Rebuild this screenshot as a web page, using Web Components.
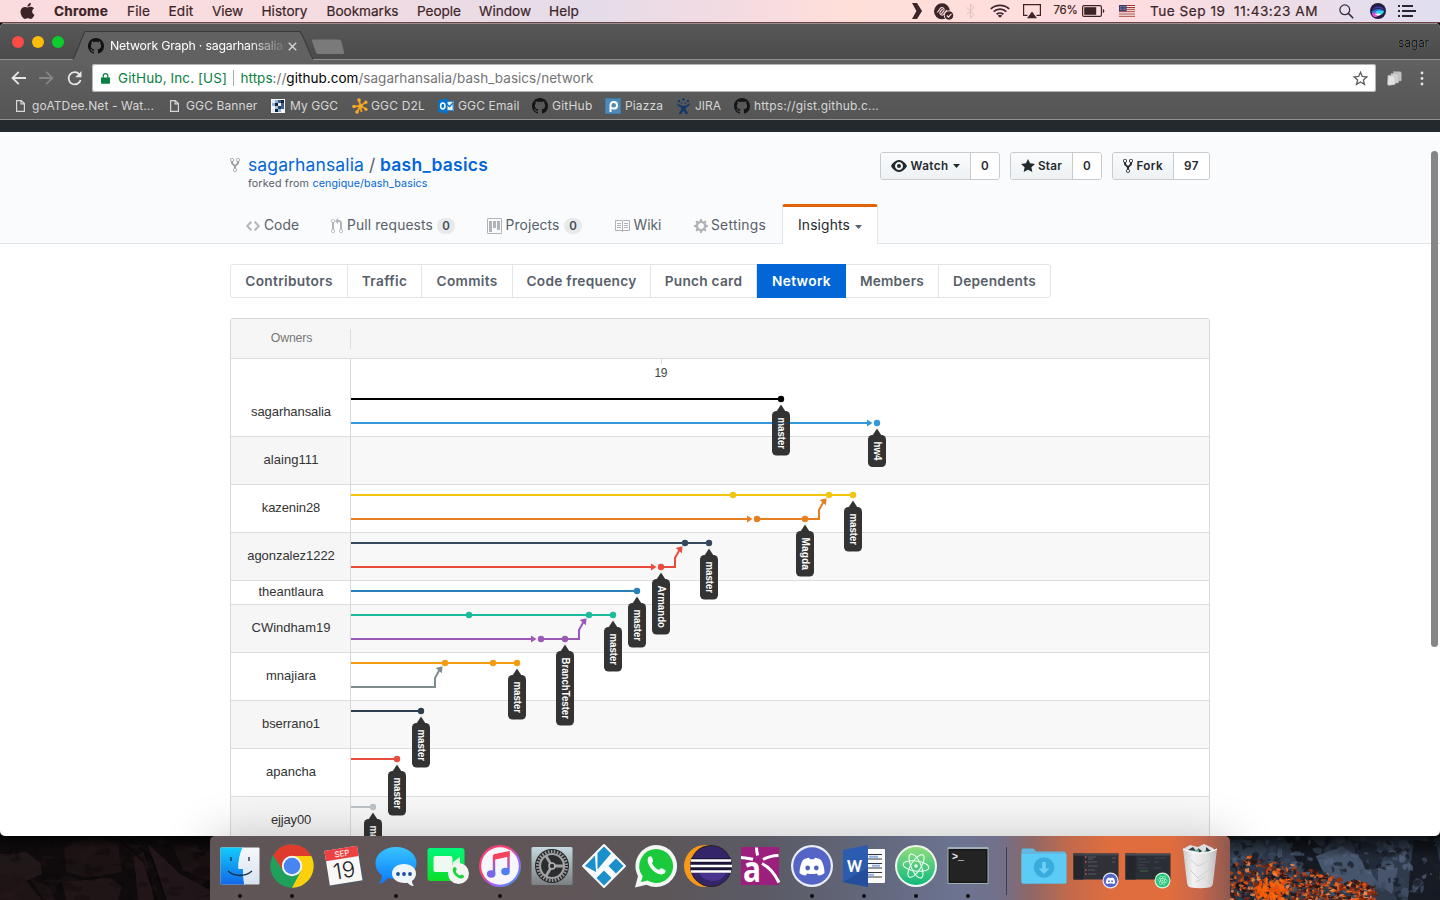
<!DOCTYPE html>
<html lang="en">
<head>
<meta charset="utf-8">
<title>Network Graph · sagarhansalia/bash_basics</title>
<style>
html,body{margin:0;padding:0;width:1440px;height:900px;overflow:hidden;background:#141010;font-family:Inter,"Liberation Sans",sans-serif}
</style>
</head>
<body>
<mac-desktop></mac-desktop>
<script>
const ICONS = {
  apple:[24,24,'<path d="M12.152 6.896c-.948 0-2.415-1.078-3.96-1.04-2.04.027-3.91 1.183-4.961 3.014-2.117 3.675-.546 9.103 1.519 12.09 1.013 1.454 2.208 3.09 3.792 3.039 1.52-.065 2.09-.987 3.935-.987 1.831 0 2.35.987 3.96.948 1.637-.026 2.676-1.48 3.676-2.948 1.156-1.688 1.636-3.325 1.662-3.415-.039-.013-3.182-1.221-3.22-4.857-.026-3.04 2.48-4.494 2.597-4.559-1.429-2.09-3.623-2.324-4.39-2.376-2-.156-3.675 1.09-4.61 1.09zM15.53 3.83c.843-1.012 1.4-2.427 1.245-3.83-1.207.052-2.662.805-3.532 1.818-.78.896-1.454 2.338-1.273 3.714 1.338.104 2.715-.688 3.559-1.701"/>'],
  github:[16,16,'<path d="M8 0C3.58 0 0 3.58 0 8c0 3.54 2.29 6.53 5.47 7.59.4.07.55-.17.55-.38 0-.19-.01-.82-.01-1.49-2.01.37-2.53-.49-2.69-.94-.09-.23-.48-.94-.82-1.13-.28-.15-.68-.52-.01-.53.63-.01 1.08.58 1.23.82.72 1.21 1.87.87 2.33.66.07-.52.28-.87.51-1.07-1.78-.2-3.64-.89-3.64-3.95 0-.87.31-1.59.82-2.15-.08-.2-.36-1.02.08-2.12 0 0 .67-.21 2.2.82.64-.18 1.32-.27 2-.27.68 0 1.36.09 2 .27 1.53-1.04 2.2-.82 2.2-.82.44 1.1.16 1.92.08 2.12.51.56.82 1.27.82 2.15 0 3.07-1.87 3.75-3.65 3.95.29.25.54.73.54 1.48 0 1.07-.01 1.93-.01 2.2 0 .21.15.46.55.38A8.013 8.013 0 0 0 16 8c0-4.42-3.58-8-8-8z"/>'],
  fork:[10,16,'<path d="M8 1a1.993 1.993 0 0 0-1 3.72V6L5 8 3 6V4.72A1.993 1.993 0 0 0 2 1a1.993 1.993 0 0 0-1 3.72V6.5l3 3v1.78A1.993 1.993 0 0 0 5 15a1.993 1.993 0 0 0 1-3.72V9.5l3-3V4.72A1.993 1.993 0 0 0 8 1zM2 4.2C1.34 4.2.8 3.65.8 3c0-.65.55-1.2 1.2-1.2.65 0 1.2.55 1.2 1.2 0 .65-.55 1.2-1.2 1.2zm3 10c-.66 0-1.2-.55-1.2-1.2 0-.65.55-1.2 1.2-1.2.65 0 1.2.55 1.2 1.2 0 .65-.55 1.2-1.2 1.2zm3-10c-.66 0-1.2-.55-1.2-1.2 0-.65.55-1.2 1.2-1.2.65 0 1.2.55 1.2 1.2 0 .65-.55 1.2-1.2 1.2z"/>'],
  eye:[16,16,'<path d="M8.06 2C3 2 0 8 0 8s3 6 8.06 6C13 14 16 8 16 8s-3-6-7.94-6zM8 12c-2.2 0-4-1.78-4-4 0-2.2 1.8-4 4-4 2.22 0 4 1.8 4 4 0 2.22-1.78 4-4 4zm2-4c0 1.11-.89 2-2 2-1.11 0-2-.89-2-2 0-1.11.89-2 2-2 1.11 0 2 .89 2 2z"/>'],
  star:[14,16,'<path d="M14 6l-4.9-.64L7 1 4.9 5.36 0 6l3.6 3.26L2.67 14 7 11.67 11.33 14l-.93-4.74z"/>'],
  code:[14,16,'<path d="M9.5 3L8 4.5 11.5 8 8 11.5 9.5 13 14 8 9.5 3zm-5 0L0 8l4.5 5L6 11.5 2.5 8 6 4.5 4.5 3z"/>'],
  pr:[12,16,'<path d="M11 11.28V5c-.03-.78-.34-1.47-.94-2.06C9.46 2.35 8.78 2.03 8 2H7V0L4 3l3 3V4h1c.27.02.48.11.69.31.21.2.3.42.31.69v6.28A1.993 1.993 0 0 0 10 15a1.993 1.993 0 0 0 1-3.72zm-1 2.92c-.66 0-1.2-.55-1.2-1.2 0-.65.55-1.2 1.2-1.2.65 0 1.2.55 1.2 1.2 0 .65-.55 1.2-1.2 1.2zM4 3c0-1.11-.89-2-2-2a1.993 1.993 0 0 0-1 3.72v6.56A1.993 1.993 0 0 0 2 15a1.993 1.993 0 0 0 1-3.72V4.72c.59-.34 1-.98 1-1.72zm-.8 10c0 .66-.55 1.2-1.2 1.2-.65 0-1.2-.55-1.2-1.2 0-.65.55-1.2 1.2-1.2.65 0 1.2.55 1.2 1.2zM2 4.2C1.34 4.2.8 3.65.8 3c0-.65.55-1.2 1.2-1.2.65 0 1.2.55 1.2 1.2 0 .65-.55 1.2-1.2 1.2z"/>'],
  project:[15,16,'<path d="M10 3h3v9h-3zM6 3h3v7H6zM2 3h3v11H2z"/><rect x=".5" y=".5" width="14" height="15" rx=".5" fill="none" stroke="currentColor"/>'],
  book:[16,16,'<path d="M3 5h4v1H3V5zm0 3h4V7H3v1zm0 2h4V9H3v1zm11-5h-4v1h4V5zm0 2h-4v1h4V7zm0 2h-4v1h4V9zm2-6v9c0 .55-.45 1-1 1H9.5l-1 1-1-1H2c-.55 0-1-.45-1-1V3c0-.55.45-1 1-1h5.5l1 1 1-1H15c.55 0 1 .45 1 1zm-8 .5L7.5 3H2v9h6V3.5zm7-.5H9.5l-.5.5V12h6V3z"/>'],
  gear:[14,16,'<path d="M14 8.77v-1.6l-1.94-.64-.45-1.09.88-1.84-1.13-1.13-1.81.91-1.09-.45-.69-1.92h-1.6l-.63 1.94-1.11.45-1.84-.88-1.13 1.13.91 1.81-.45 1.09L0 7.23v1.59l1.94.64.45 1.09-.88 1.84 1.13 1.13 1.81-.91 1.09.45.69 1.92h1.59l.63-1.94 1.11-.45 1.84.88 1.13-1.13-.92-1.81.47-1.09L14 8.75v.02zM7 11c-1.66 0-3-1.34-3-3s1.34-3 3-3 3 1.34 3 3-1.34 3-3 3z"/>'],
  caret:[8,4,'<path d="M0 0h8L4 4z"/>'],
  chevron:[9,16,'<path d="M0 0h4.500L9 8l-4.500 8H0l4-8z"/>'],
  vpn:[20,17,'<circle cx="8" cy="8.300" r="8"/><path d="M3.300 9.500l3.200-4.300a2.100 2.100 0 0 1 3.400 2.400L7.400 10.800M12.700 7l-3.200 4.300a2.100 2.100 0 0 1-3.400-2.400L8.600 5.800" fill="none" stroke="#fde0e0" stroke-width="1.100"/><circle cx="15" cy="12.500" r="4.700" stroke="#fde0e0" stroke-width="1"/><path d="M12.800 12.500l1.700 1.600 2.900-3.200" fill="none" stroke="#fde0e0" stroke-width="1.200"/>'],
  bluetooth:[10,16,'<path d="M1 4.500l8 7L5 15V1l4 3.500-8 7" fill="none" stroke="currentColor" stroke-width="1"/>'],
  wifi:[20,15,'<g fill="none" stroke="currentColor" stroke-width="1.800"><path d="M.8 5.200a13 13 0 0 1 18.400 0M3.700 8.100a9 9 0 0 1 12.600 0M6.600 11a5 5 0 0 1 6.800 0"/></g><path d="M10 14.800l-2.200-2.300a3.200 3.200 0 0 1 4.400 0z"/>'],
  airplay:[18,15,'<path d="M4.500 11.400H.6V.6h16.800v10.800h-3.900" fill="none" stroke="currentColor" stroke-width="1.200"/><path d="M9 7.500l5 6.700H4z"/>'],
  battery:[23,12,'<rect x=".6" y=".6" width="18.800" height="10.800" rx="1.500" fill="none" stroke="currentColor" stroke-width="1.200"/><rect x="2.200" y="2.200" width="12" height="7.600"/><path d="M20.800 4c2 .5 2 3.500 0 4z"/>'],
  flag:[16,12,'<rect width="16" height="12" fill="#fff"/><path d="M0 .5h16M0 2.600h16M0 4.700h16M0 6.800h16M0 8.900h16M0 11.200h16" stroke="#a8322e" stroke-width="1.050"/><rect width="7.500" height="6.300" fill="#383a6d"/><path d="M1 1.500h6M1 3.100h6M1 4.700h6" stroke="#d5d3e2" stroke-width=".6" stroke-dasharray=".7 .7"/>'],
  search:[15,15,'<circle cx="5.800" cy="5.800" r="4.900" fill="none" stroke="currentColor" stroke-width="1.300"/><path d="M9.400 9.400l4.800 4.900" stroke="currentColor" stroke-width="1.600"/>'],
  siri:[16,16,'<circle cx="8" cy="8" r="8" fill="#231c3e"/><path d="M2 6.500C4 3 12 2 14.500 7 11 4.800 6 5 2 6.500z" fill="#3b3ca8"/><path d="M1.500 8.500c3-3 9-3.500 13-.5-2 3-5 5-8 5s-4.500-2-5-4.500z" fill="#2b6fd6"/><path d="M5 9.500c3-3 6-2 9-1-1.500 3-3 3.500-6 3.500z" fill="#35d5ee"/><path d="M2 10c3-1.500 4.500 0 7 1.500-1 2-3 3-4.500 2.500S2 11.500 2 10z" fill="#e34fd2"/><path d="M5 11c2-.8 4-.8 6 .2-1 1.600-4 2-6-.2z" fill="#fff"/>'],
  list:[18,12,'<path d="M0 0h2v2H0zM4 0h11v2H4zM0 5h2v2H0zM4 5h14v2H4zM0 10h2v2H0zM4 10h11v2H4z"/>'],
  back:[15,14,'<path d="M7.800.8L1.500 7l6.300 6.200M1.500 7H15" fill="none" stroke="currentColor" stroke-width="1.800"/>'],
  fwd:[15,14,'<path d="M7.200.8L13.500 7l-6.300 6.200M13.500 7H0" fill="none" stroke="currentColor" stroke-width="1.800"/>'],
  reload:[15,15,'<path d="M12.300 3.200A6.100 6.100 0 1 0 13.600 9" fill="none" stroke="currentColor" stroke-width="1.800"/><path d="M14.500 0v6.300H8.200z"/>'],
  lock:[9,11,'<path d="M0 4.500h9V10q0 .8-.8.8H.8Q0 10.800 0 10z"/><path d="M2.200 5V3a2.300 2.300 0 0 1 4.600 0v2" fill="none" stroke="currentColor" stroke-width="1.200"/>'],
  starline:[14,14,'<path d="M7 1.200l1.700 3.900 4.200.4-3.200 2.800 1 4.200L7 10.300l-3.700 2.200 1-4.200L1.100 5.500l4.200-.4z" fill="none" stroke="currentColor" stroke-width="1.200"/>'],
  ext:[15,15,'<g stroke="#a8a8a8" stroke-width=".5"><path d="M6.500.6l7 .2.800 1v8l-6 .8-2.500-1z" fill="#c4c4c4"/><path d="M4 2.500l6 .2 1.500 1.600v7.500l-6 .8-2-1z" fill="#d2d2d2"/><path d="M1 4.300l5.500.3L8.200 6.500v7l-6.500.9-1.300-1.200z" fill="#e2e2e2"/></g>'],
  dots:[4,15,'<circle cx="2" cy="2" r="1.400"/><circle cx="2" cy="7.500" r="1.400"/><circle cx="2" cy="13" r="1.400"/>'],
  close:[9,9,'<path d="M.8.800l7.400 7.400M8.200.8L.8 8.200" stroke="currentColor" stroke-width="1.500"/>'],
  page:[9,12,'<path d="M.6.600h4.700l3.100 3v7.800H.6zM5 .6v3.300h3.400" fill="none" stroke="currentColor" stroke-width="1.200"/>'],
  ggc:[14,14,'<rect width="14" height="14" fill="#f4f7fb"/><path d="M1 1h3v3H1zM1 10h3v3H1z" fill="#dfe8f3"/><path d="M4 1h3v3H4zM1 4h3v3H1zM7 10h3v3H7z" fill="#8fb2d8"/><path d="M7 1h3v3H7zM10 4h3v3h-3zM10 7h3v3h-3z" fill="#3c5f91"/><path d="M10 1h3v3h-3zM4 4h3v3H4zM4 10h3v3H4z" fill="#14223c"/><path d="M4 7h3v3H4z" fill="#a9c4e2"/><path d="M7 7h3v3H7z" fill="#274270"/>'],
  d2l:[16,16,'<g stroke="#f0a01e" stroke-width="1.900"><path d="M8.500 8L7 2M8.500 8L14 4M8.500 8l6 3M8.500 8L5 14M8.500 8L2 8.500M8.500 8l1 6"/></g><g fill="#f7ab2b"><circle cx="7" cy="2" r="1.800"/><circle cx="14" cy="4.200" r="1.600"/><circle cx="14" cy="11.300" r="1.600"/><circle cx="5" cy="14" r="1.800"/><circle cx="1.900" cy="8.500" r="1.700"/><circle cx="8.500" cy="8" r="2.100"/></g>'],
  outlook:[16,16,'<path d="M8 3h7.500v10H8z" fill="#fff"/><path d="M8 3.400h7.100v9.200H8z" fill="#e8f2fb" stroke="#0a72c6" stroke-width=".9"/><path d="M8.500 6l3 2.500L15 5" fill="none" stroke="#0a72c6" stroke-width="1.300"/><path d="M0 2l9.500-1.700v15.400L0 14z" fill="#0a72c6"/><ellipse cx="4.800" cy="8" rx="2.200" ry="2.900" fill="none" stroke="#fff" stroke-width="1.500"/>'],
  piazza:[16,16,'<rect width="16" height="16" fill="#3f7cab"/><rect x="1" y="1" width="14" height="14" fill="#4d8ab9"/><path d="M5.500 14V7a3.300 3.300 0 1 1 3.300 3.600c-1.300 0-2-.4-3-1" fill="none" stroke="#fff" stroke-width="2"/>'],
  jira:[13,16,'<g fill="#10386b"><circle cx="2" cy="3" r="1.200"/><circle cx="6.500" cy="1.500" r="1.300"/><circle cx="11" cy="3" r="1.200"/><circle cx="4.500" cy="5" r=".8"/><circle cx="8.500" cy="5" r=".8"/><path d="M0 5.200l4.500 2.600h4L13 5.200l-.8 2.300L8.600 10v1.500L11.500 16H8.700L6.500 12.600 4.300 16H1.500l2.900-4.500V10L.8 7.500z"/></g>']
};
const el = (name, css, html) => customElements.define(name, class extends HTMLElement {
  connectedCallback(){
    if (this.shadowRoot) return;
    const t = document.createElement('template');
    t.innerHTML = '<style>' + css + '</style>' + (typeof html === 'function' ? html(this) : html);
    this.attachShadow({mode:'open'}).appendChild(t.content.cloneNode(true));
  }
});
const ft = (w, text, ml = 0, extra = '') => `<fit-text w="${w}" style="margin-left:${ml}px;${extra}">${text}</fit-text>`;
const ic = (n, w, h, ml = 0, extra = '') => `<ui-icon name="${n}" w="${w}" h="${h}" style="margin-left:${ml}px;${extra}"></ui-icon>`;

el('ui-icon', ':host{display:block;flex:none}svg{display:block;fill:currentColor;overflow:visible}', e => {
  const [w,h,m] = ICONS[e.getAttribute('name')];
  return `<svg width="${e.getAttribute('w')||w}" height="${e.getAttribute('h')||h}" viewBox="0 0 ${w} ${h}" preserveAspectRatio="none">${m}</svg>`;
});

/* macOS menu bar */
el('mac-menubar', `:host{display:flex;align-items:center;height:22px;border-bottom:1px solid #6e4144;color:#3c2427;font-size:13.600px;-webkit-text-stroke:.2px;
 background:linear-gradient(90deg,#fadcdd 0,#f7dce0 270px,#ecdbe4 440px,#e4dce9 590px,#f4dbe2 730px,#ffdfd8 850px,#ffdedd 1000px,#fddde0 1140px,#efdde6 1260px,#e0def0 1440px)}`,
 ic('apple',17,16,19) + ft(54,'Chrome',18,'font-weight:700') + ft(23,'File',19) + ft(25,'Edit',18.500) + ft(31,'View',18.500) + ft(46,'History',18.500) + ft(72,'Bookmarks',19) + ft(44,'People',18.500) + ft(52,'Window',18) + ft(30,'Help',18) +
 ic('chevron',10,16,332.500) + ic('vpn',20,17,12) + ic('bluetooth',9,16,12,'color:#d9bfc2') + ic('wifi',20,14,15) + ic('airplay',18,15,13) +
 ft(24,'76%',13,'font-size:11.500px') + ic('battery',23,12,4) + ic('flag',16,12,14.500) + ft(168,'Tue Sep 19&nbsp; 11:43:23 AM',15) + ic('search',15,15,20.500,'color:#35303f') + ic('siri',16,16,16) + ic('list',18,12,12,'color:#2a2434'));

/* Browser chrome */
el('tab-strip', `:host{display:flex;height:36px;background:linear-gradient(#585858,#4a4a4a);border-top:1px solid #9a8f8f;box-shadow:inset 0 -1px #929292}
 .lights{display:flex;gap:8px;padding:12px 0 0 12px;width:60px}.lights i{width:12px;height:12px;border-radius:50%;flex:none}
 .tab{display:grid;width:242px;height:36px}.tab>*{grid-area:1/1}.in{display:flex;align-items:center;padding:8px 0 0 16px;color:#fff;font-size:12.300px}
 .new{margin-top:15px;margin-left:-2px}.who{margin:12px 11px 0 auto;color:#0d0d0d;font-size:12px;text-shadow:.7px 0 #5a7ea5,-.7px 0 #96703f}
 .fade{display:flex;-webkit-mask-image:linear-gradient(90deg,#000 144px,transparent 184px);mask-image:linear-gradient(90deg,#000 144px,transparent 184px)}`,
 `<div class="lights"><i style="background:#fc4a45"></i><i style="background:#fdbc09"></i><i style="background:#0bcd2b"></i></div>
 <div class="tab"><svg width="242" height="36"><path d="M0 36C3 34 11 9 13 7.500Q14 7.500 16 7.500H226Q229 7.500 230 9L240 34Q241 35.500 242 36z" fill="#616161"/><path d="M1 35C4 31 11 10 13 7.500H228C231 10 238 31 241 35" fill="none" stroke="#3a3a3a" stroke-width="1.200"/></svg>
 <div class="in">${ic('github',16,16,0,'color:#111')}<div class="fade">${ft(173,'Network Graph · sagarhansalia',6)}</div>${ic('close',9,9,5,'color:#d0d0d0')}</div></div>
 <svg class="new" width="33" height="16"><path d="M1.500.5h25q2 0 2.700 1.500l3 11.500q.5 1.500-1.500 1.500h-24q-2 0-2.700-1.500L0 2q-.3-1.500 1.500-1.500z" fill="#7a7a7a"/></svg>
 <div class="who">${ft(31,'sagar')}</div>`);
el('nav-bar', `:host{display:flex;align-items:center;height:36px;color:#e6e6e6}
 .omni{display:flex;align-items:center;box-sizing:border-box;width:1284px;height:28px;margin-left:10.500px;background:#fff;border-radius:3px;box-shadow:inset 0 0 0 1px #b5b5b5;font-size:13.500px;color:#747474}
 .g{color:#0b8043}.b{color:#000}.sep{width:1px;height:16px;background:#aaa;margin-left:6px}`,
 ic('back',15,14,10.500) + ic('fwd',15,14,13,'color:#858585') + ic('reload',15,15,13) +
 `<div class="omni">${ic('lock',9,11,9,'color:#0b8043')}${ft(109,'<span class="g">GitHub, Inc. [US]</span>',8)}<div class="sep"></div>${ft(353,'<span class="g">https</span>://<span class="b">github.com</span>/sagarhansalia/bash_basics/network',6.500)}${ic('starline',15,15,759.500,'color:#5a5a5a')}</div>` +
 ic('ext',15,15,11) + ic('dots',4,15,17.500));
el('bookmark-bar', `:host{display:flex;align-items:center;height:20px;padding-bottom:3px;color:#d6d6d6;font-size:12px}`,
 ic('page',9,12,15.500) + ft(122,'goATDee.Net - Wat...',7.500) + ic('page',9,12,15.500) + ft(71.500,'GGC Banner',7.500) + ic('ggc',14,14,13.500) + ft(48,'My GGC',5) + ic('d2l',16,16,14) + ft(54,'GGC D2L',3) + ic('outlook',16,16,13) + ft(61.500,'GGC Email',4) + ic('github',16,16,12.500,'color:#151515') + ft(40.500,'GitHub',4) + ic('piazza',16,16,12.500) + ft(38,'Piazza',4) + ic('jira',13,16,14) + ft(26,'JIRA',5) + ic('github',16,16,13,'color:#151515') + ft(125,'https://gist.github.c...',4));

/* Repository header */
el('social-button', `:host{display:flex;box-sizing:border-box;height:28px;border:1px solid #c8cbcf;border-radius:3px;overflow:hidden;font-size:11.700px;font-weight:600;color:#24292e}
 .a{display:flex;align-items:center;background:linear-gradient(#fafbfc,#eff3f6 90%);border-right:1px solid #c8cbcf;padding-left:10px;box-sizing:border-box}
 .n{display:flex;align-items:center;justify-content:center;flex:1;background:#fff}`,
 e => `<div class="a" style="width:${e.getAttribute('aw')}px"><slot></slot></div><div class="n">${ft(e.getAttribute('nw'),e.getAttribute('n'))}</div>`);
el('repo-header', `:host{display:flex;flex-direction:column;flex:none;box-sizing:border-box;height:112px;padding:0 230px;background:#fafbfc;border-bottom:1px solid #e1e4e8;color:#586069}
 .top{display:flex;height:72px;flex:none}.name{display:flex;flex-direction:column;width:650px}
 .title{display:flex;align-items:center;height:24px;margin-top:20px;font-size:17.500px;color:#0366d6}
 .from{display:flex;align-items:center;height:12px;margin-top:2px;margin-left:18px;font-size:10.700px}
 .btns{display:flex;gap:10px;padding-top:20px}.l{color:#0366d6}.tabs{display:flex;flex:none;box-sizing:border-box;height:40px;margin-bottom:-1px;padding-top:3px;align-items:center;font-size:13.800px}
 .badge{display:flex;justify-content:center;align-items:center;width:18px;height:16px;border-radius:9px;background:#e7e9eb;font-size:11.500px;font-weight:600;color:#444d56;margin-left:5px}
 .sel{display:flex;align-items:center;box-sizing:border-box;width:96px;height:40px;margin-top:-3px;margin-left:16px;background:#fff;border:1px solid #e1e4e8;border-top:3px solid #e36209;border-bottom:0;border-radius:3px 3px 0 0;color:#24292e;padding-left:15px}`,
 `<div class="top"><div class="name"><div class="title">${ic('fork',10,16,0,'color:#9aa0a5;margin-top:2px')}${ft(116,'sagarhansalia',8)}${ft(7,'/',5,'color:#586069')}${ft(108,'bash_basics',4,'font-weight:600')}</div>
 <div class="from">${ft(61,'forked from')}${ft(115,'cengique/bash_basics',3.500,'color:#0366d6')}</div></div>
 <div class="btns"><social-button n="0" nw="8" aw="90" style="width:120px">${ic('eye',16,16)}${ft(38,'Watch',3.500)}${ic('caret',7,4,4.500)}</social-button>
 <social-button n="0" nw="8" aw="62" style="width:92px">${ic('star',14,16)}${ft(24,'Star',3)}</social-button>
 <social-button n="97" nw="15" aw="61" style="width:98px">${ic('fork',10,16)}${ft(26.500,'Fork',3.500)}</social-button></div></div>
 <div class="tabs">${ic('code',14,16,16,'color:#b0b4b8')}${ft(35,'Code',4)}${ic('pr',12,16,32,'color:#b0b4b8')}${ft(86,'Pull requests',4)}<div class="badge" style="margin-left:4px">0</div>${ic('project',15,16,32,'color:#b0b4b8')}${ft(54,'Projects',3.500)}<div class="badge" style="margin-left:4.500px">0</div>${ic('book',16,16,32,'color:#b0b4b8')}${ft(28,'Wiki',3.500)}${ic('gear',14,16,32.500,'color:#b0b4b8')}${ft(55,'Settings',3)}
 <div class="sel">${ft(52,'Insights')}${ic('caret',7,4,4.500,'color:#586069;margin-top:2px')}</div></div>`);
el('insight-nav', `:host{display:flex;flex:none;box-sizing:border-box;width:821px;height:34px;margin:20px 0 0 230px;border:1px solid #e1e4e8;border-radius:3px;font-size:13.700px;font-weight:600;color:#586069}
 div{display:flex;align-items:center;justify-content:center;box-sizing:border-box;border-right:1px solid #e1e4e8}div:last-child{border:0}
 .on{background:#0366d6;color:#fff;margin:-1px 0;border:0}`,
 [['Contributors',117,87.500],['Traffic',74,45.500],['Commits',91,61],['Code frequency',138,110],['Punch card',106,77.500],['Network',89,59],['Members',93,64],['Dependents',111,83]].map(([t,w,tw],i)=>`<div class="${i==5?'on':''}" style="width:${w}px">${ft(tw,t)}</div>`).join(''));

/* Network graph */
const pointer = (x,y,text,len) => `<path d="M${x} ${y+5.500}l4.500 7h-9z" fill="#333"/><rect x="${x-9}" y="${y+12}" width="18" height="${len+13.500}" rx="4.500" fill="#2f2f2f" fill-opacity=".98"/><text transform="translate(${x-3.500} ${y+18.500}) rotate(90)" textLength="${len+.5}" lengthAdjust="spacingAndGlyphs" font-size="10.500" font-weight="700" fill="#fff">${text}</text>`;
const line = (x,y,c) => `<path d="M351 ${y}H${x}" stroke="${c}" stroke-width="2"/>`;
const dot = (x,y,c) => `<circle cx="${x}" cy="${y}" r="3.200" fill="${c}"/>`;
const arrow = (x,y,c) => line(x-9,y,c) + `<path d="M${x-10} ${y-3.500}v7l5.500-3.500z" fill="${c}"/>`;
const merge = (x0,tx,ty,c) => `<path d="M${x0} ${ty+24}H${tx-10}V${ty+15}L${tx-5} ${ty+6}" fill="none" stroke="${c}" stroke-width="2"/><path d="M${tx-2.500} ${ty+3.300}l-6.800 1.700 6.200 5.300z" fill="${c}"/>`;
const BLACK='#000',BLUE='#3498db',Y='#f1c40f',O='#e67e22',N='#34495e',R='#e74c3c',B2='#2980b9',T='#1abc9c',P='#9b59b6',A='#f39c12',G='#7f8c8d',D='#2c3e50',S='#bdc3c7';
const bands = [[437,484],[533,580],[605,652],[701,748],[797,840]];
el('network-graph', `:host{display:flex;flex-direction:column;box-sizing:border-box;width:980px;height:560px;margin:20px 0 0 230px;border:1px solid #d6d8da;border-radius:3px;font-family:"Liberation Sans",Arial,sans-serif;overflow:hidden;flex:none}
 .head{display:flex;flex:none;align-items:center;height:39px;background:#f6f6f6;border-bottom:1px solid #ddd;color:#777;font-size:12.300px}
 .head span{display:flex;justify-content:center;box-sizing:border-box;width:120px;padding-left:2px;height:20px;align-items:center;border-right:1px solid #ddd}
 .body{display:flex;flex:none}.owners{width:119px;border-right:1px solid #d8d8d8;color:#333;font-size:13px}
 .owners div{display:flex;align-items:center;justify-content:center;box-sizing:border-box;height:48px;padding:0 0 2px 1px;border-bottom:1px solid #ddd;background:#fff}
 .owners div:first-child{height:78px;padding:28px 0 0 1px}.owners div:nth-child(5){height:24px}
 .owners div:nth-child(even){background:#f6f6f6}svg{display:block}`,
 `<div class="head"><span>${ft(41.500,'Owners')}</span></div><div class="body"><div class="owners">
 ${[['sagarhansalia',80],['alaing111',55],['kazenin28',58.500],['agonzalez1222',87.500],['theantlaura',65],['CWindham19',79],['mnajiara',50],['bserrano1',58],['apancha',50],['ejjay00',40]].map(([t,w])=>`<div>${ft(w,t)}</div>`).join('')}
 </div><svg width="858" height="520" viewBox="351 359 858 520"><rect x="351" y="359" width="858" height="520" fill="#fff"/>
 ${bands.map(([a,b])=>`<rect x="351" y="${a}" width="858" height="${b-a}" fill="#f8f8f8"/>`).join('')}
 ${[436,484,532,580,604,652,700,748,796].map(y=>`<rect x="351" y="${y}" width="858" height="1" fill="#ddd"/>`).join('')}
 <rect x="661" y="359" width="1" height="5" fill="#ddd"/><text x="654.500" y="377" font-size="12" textLength="13" fill="#444">19</text>
 ${line(781,399,BLACK)+arrow(877,423,BLUE)+line(853,495,Y)+arrow(757,519,O)}<path d="M757 519H806" stroke="${O}" stroke-width="2"/>${merge(805,829,495,O)}
 ${line(709,543,N)+arrow(661,567,R)+merge(661,685,543,R)+line(637,591,B2)+line(613,615,T)+arrow(541,639,P)+merge(541,589,615,P)+line(517,663,A)+merge(351,445,663,G)+line(421,711,D)+line(397,759,R)+line(373,807,S)}
 ${[[781,399,BLACK],[877,423,BLUE],[733,495,Y],[829,495,Y],[853,495,Y],[757,519,O],[805,519,O],[685,543,N],[709,543,N],[661,567,R],[637,591,B2],[469,615,T],[589,615,T],[613,615,T],[541,639,P],[565,639,P],[445,663,A],[493,663,A],[517,663,A],[421,711,D],[397,759,R],[373,807,S]].map(a=>dot(...a)).join('')}
 ${pointer(781,399,'master',31)+pointer(877,423,'hw4',18.500)+pointer(853,495,'master',31)+pointer(805,519,'Magda',32)+pointer(709,543,'master',31)+pointer(661,567,'Armando',42)+pointer(637,591,'master',31)+pointer(613,615,'master',31)+pointer(565,639,'BranchTester',61)+pointer(517,663,'master',31)+pointer(421,711,'master',31)+pointer(397,759,'master',31)+pointer(373,807,'master',31)}
 <path d="M772 423h18" stroke="#22465f" stroke-width="2" opacity=".45"/></svg></div>`);
el('chrome-window', `:host{display:flex;flex-direction:column;height:813px;border-radius:5px;overflow:hidden;background:#fff;flex:none}
 .bars{background:linear-gradient(#616161,#555);height:59px;border-bottom:1px solid #8f8f8f;flex:none}
 .dark{height:12px;background:#24292e;flex:none}.page{display:grid;height:704px;grid-template:704px / 1440px}.page>*{grid-area:1/1}
 .content{display:flex;flex-direction:column;overflow:hidden}.thumb{justify-self:end;margin:19px 2px 0 0;width:7px;height:496px;border-radius:4px;background:#808080;opacity:.95}`,
 `<tab-strip></tab-strip><div class="bars"><nav-bar></nav-bar><bookmark-bar></bookmark-bar></div><div class="dark"></div>
 <div class="page"><div class="content"><repo-header></repo-header><insight-nav></insight-nav><network-graph></network-graph></div><div class="thumb"></div></div>`);

/* Wallpaper strips on either side of the dock */
const rng = s => () => (s = (s * 16807) % 2147483647) / 2147483647;
const blob = (r,x,y,w,h,c,o=1) => { let p=''; for(let i=0;i<7;i++){const a=i/7*6.283,k=.5+r()*.8;p+=(x+Math.cos(a)*w*k).toFixed(1)+','+(y+Math.sin(a)*h*k).toFixed(1)+' ';} return `<polygon points="${p}" fill="${c}" opacity="${o}"/>`; };
el('rock-wall', ':host{display:block;height:64px}svg{display:block}', e => {
  const right = e.hasAttribute('lava'), r = rng(right?77:31); let s='';
  if (!right) {
    s += `<rect width="210" height="64" fill="#0f0b0c"/><path d="M0 18l26-2 14 10 2 12-16 7-26-6z" fill="#201719"/><path d="M64 12l30-12 24 8 4 28-34 6-22-6z" fill="#1a1213"/><path d="M0 38l22 2 20 24H0z" fill="#1e1415"/><path d="M62 46l48-4 12 8-4 14H66z" fill="#1f1516"/><path d="M30 42l18 8 8 14H44z" fill="#181011"/><path d="M134 20l10-4 10 48h-16z" fill="#211517"/><path d="M148 8l32 30 30 16v10h-44z" fill="#21161a"/><path d="M170 6l40 10v30l-26-12z" fill="#1a1113"/><path d="M118 2l26 24 12 38M128 2l24 20 14 42" stroke="#060404" stroke-width="1.500" fill="none" opacity=".7"/>`;
    for(let i=0;i<90;i++) s+=blob(r,r()*210,r()*64,2+r()*9,1+r()*4,r()<.5?'#050404':'#2b1d1e',.25);
    s+='<rect width="210" height="12" fill="url(#d)"/>';
  } else {
    s += '<rect width="210" height="64" fill="#2f3b4d"/>';
    s+='<path d="M54 0h24l14 12 12 22-26 2-12-12z" fill="#171a22"/><path d="M184 4l22 2 4 20v38h-32l2-30z" fill="#171b24"/><path d="M0 4h30l8 10-10 10H0z" fill="#3c4a5e"/><path d="M86 20l26-10 20 14 20 28-30 2-30-20z" fill="#46556b"/><path d="M120 4l26 4 8 20-16 8z" fill="#222a37"/><path d="M148 30l20 2-6 26-14-10z" fill="#47546b"/>';
    for(let i=0;i<260;i++) s+=blob(r,r()*210,r()*64,1+r()*4.500,1+r()*4,['#46546a','#3a475b','#161a23','#1b202a','#566581'][Math.floor(r()*5)],.7);
    for(let i=0;i<620;i++){const x=r()*146,t=x<20?18+(20-x)*.6:18+(x-20)*.25,y=t+Math.pow(r(),.8)*(66-t);s+=blob(r,x,y,.8+r()*2.600,.6+r()*2,['#32140f','#8b2d10','#e8561a','#fa6a16','#1d1416','#5a2418','#b9431b','#ee8a4c'][Math.floor(r()*8)],.9);}
    for(let i=0;i<60;i++) s+=blob(r,26+r()*32,44+r()*22,1.500+r()*2.500,1.500+r()*2.500,['#ff5f06','#f87012','#e9510b'][i%3],.85);
    s+='<rect width="210" height="22" fill="url(#d)"/>';
  }
  return `<svg width="210" height="64"><defs><linearGradient id="d" x2="0" y2="1"><stop stop-color="#000" stop-opacity=".75"/><stop offset="1" stop-color="#000" stop-opacity="0"/></linearGradient></defs>${s}</svg>`;
});

/* Dock */
const ATOM = '<g fill="none" stroke="#e8fff0" stroke-width="1.100"><ellipse cx="26" cy="30" rx="13" ry="5" transform="rotate(8 26 30)"/><ellipse cx="26" cy="30" rx="13" ry="5" transform="rotate(66 26 30)"/><ellipse cx="26" cy="30" rx="13" ry="5" transform="rotate(-58 26 30)"/></g><circle cx="26" cy="30" r="1.800" fill="#e8fff0"/>';
const FACE = '<path d="M13.500 37c0-5 1.500-10 3.500-13 2-1.300 4-2 6.200-2.200l.6 1.500h4.400l.6-1.500c2.200.2 4.200.9 6.200 2.200 2 3 3.500 8 3.500 13-1.500 1.500-3.800 2.500-6.200 2.600l-1.600-2.200c-3 .8-6.400.8-9.400 0l-1.600 2.200c-2.400-.1-4.700-1.100-6.200-2.600z" fill="#fff"/><circle cx="21.700" cy="32" r="2.400" fill="#5262bd"/><circle cx="30.300" cy="32" r="2.400" fill="#5262bd"/>';
const APPS = {
 finder:`<defs><linearGradient id="a" x2="0" y2="1"><stop stop-color="#12cbfb"/><stop offset="1" stop-color="#1268e8"/></linearGradient><linearGradient id="b" x2="0" y2="1"><stop stop-color="#f6f8fb"/><stop offset="1" stop-color="#d7e2ef"/></linearGradient></defs><rect x="6.500" y="11.500" width="39" height="37" rx="1" fill="url(#b)"/><path d="M6.500 11.500H29c-3 6-4.500 14-4.300 21h4.800c-.3 5 .2 11 1.200 16H6.500z" fill="url(#a)"/><path d="M29 11.500c-3 6-4.500 14-4.300 21h4.800c-.3 5 .2 11 1.200 16" fill="none" stroke="#fff" stroke-width=".8"/><path d="M17 21v4M35 21v4" stroke="#162b44" stroke-width="1.300"/><path d="M14 35c7 6 17 6 24 0" fill="none" stroke="#162b44" stroke-width="1.300"/>`,
 chrome:`<circle cx="26" cy="30" r="21.700" fill="#1fa15b"/><path d="M26 20h19.200A21.700 21.700 0 0 1 26 51.700l9-16.700z" fill="#fdd00c"/><path d="M7.200 19.200A21.700 21.700 0 0 1 45.200 20H26a10.200 10.200 0 0 0-9.300 14.500z" fill="#e03a2d"/><circle cx="26" cy="30" r="10.200" fill="#f4f6f5"/><circle cx="26" cy="30" r="8.300" fill="#4a84ee"/>`,
 calendar:`<g transform="rotate(-9 26 30)"><rect x="10" y="13" width="34" height="36" rx="1" fill="#555a5e"/><rect x="9" y="12" width="33" height="35" fill="#f8f8f8"/><rect x="9" y="12" width="33" height="10.500" fill="#ee4040"/><text x="26" y="20.200" font-size="8" text-anchor="middle" fill="#fff" font-family="Inter,sans-serif">SEP</text><text x="25.500" y="42" font-size="22" text-anchor="middle" fill="#222" font-weight="300" font-family="Inter,sans-serif" textLength="22">19</text></g>`,
 messages:`<defs><linearGradient id="a" x2="0" y2="1"><stop stop-color="#38c4ff"/><stop offset="1" stop-color="#0a7aff"/></linearGradient></defs><path d="M26 11c11.600 0 20.500 7 20.500 16S37.600 43 26 43c-3 0-5.500-.4-8-1.200-2 3.200-5 5.200-9.500 6 2.500-2.500 3.500-5 3.500-8.500C7.800 36.300 5.500 32 5.500 27 5.500 18 14.400 11 26 11z" fill="url(#a)"/><path d="M34 28c7 0 12 4 12 9.500 0 3-1.500 5.700-4 7.500 0 2 .7 3.500 2 5-3 0-5-1.300-6.500-3.200-8.500 1.200-15.500-3-15.500-9.300C22 32 27 28 34 28z" fill="#eef6fc"/><g fill="#1c4e96"><circle cx="28" cy="38" r="1.900"/><circle cx="34" cy="38" r="1.900"/><circle cx="40" cy="38" r="1.900"/></g>`,
 facetime:`<defs><linearGradient id="a" x2="0" y2="1"><stop stop-color="#02f77c"/><stop offset="1" stop-color="#0edc28"/></linearGradient></defs><rect x="5.500" y="12" width="37" height="33" rx="3" fill="url(#a)"/><rect x="11.500" y="20" width="19" height="16" rx="2" fill="#eefaf0"/><path d="M31 26l7-5v13l-7-4z" fill="#dff5e3"/><circle cx="36.500" cy="37.500" r="10.500" fill="#f2f5f2"/><path d="M31.500 31.500c1-1 2.500-.8 3.300 1.700l-1 2c.8 2 2.200 3.400 4 4.200l2-1c2.500.8 2.700 2.200 1.700 3.300-4.500 3.500-13.500-5.500-10-10.200z" fill="#1fd43a"/>`,
 itunes:`<defs><linearGradient id="a" x2="1" y2="1"><stop stop-color="#fd3c8c"/><stop offset=".4" stop-color="#f8426e"/><stop offset=".6" stop-color="#b05bf0"/><stop offset="1" stop-color="#26a9f8"/></linearGradient><linearGradient id="b" gradientUnits="userSpaceOnUse" x1="0" x2="0" y1="15" y2="42"><stop stop-color="#fb3f4e"/><stop offset=".5" stop-color="#b056c8"/><stop offset="1" stop-color="#3c80f0"/></linearGradient></defs><circle cx="26" cy="30" r="21" fill="url(#a)"/><circle cx="26" cy="30" r="18.800" fill="#f7f6fa"/><path d="M20 19.500l14.500-3V34M20 19.500V37" fill="none" stroke="url(#b)" stroke-width="2.400"/><path d="M19 19l16.500-3.400v5L19 24z" fill="#f5455c"/><ellipse cx="17.200" cy="38" rx="4.300" ry="3.700" fill="#7a66e8"/><ellipse cx="31.500" cy="35.500" rx="4.300" ry="3.700" fill="#4f7ef0"/>`,
 prefs:`<defs><linearGradient id="a" x2="0" y2="1"><stop stop-color="#c5d9e0"/><stop offset="1" stop-color="#7b8084"/></linearGradient></defs><rect x="5.500" y="11" width="41" height="38" rx="1.500" fill="url(#a)"/><circle cx="26" cy="30" r="17" fill="#26282a"/><circle cx="26" cy="30" r="14.500" fill="none" stroke="#98999a" stroke-width="3" stroke-dasharray="1.600 1.430"/><circle cx="26" cy="30" r="12" fill="#2c2d2e" stroke="#a2a3a4" stroke-width="2.200"/><path d="M26 30h11M26 30l-6-10M26 30l-6 10" stroke="#a2a3a4" stroke-width="2.800"/><circle cx="26" cy="30" r="3" fill="#333" stroke="#b5b5b5" stroke-width="1.500"/>`,
 kodi:`<path d="M26 9L47 30 26 51 5 30z" fill="#f7fafb" stroke="#f7fafb" stroke-width="2" stroke-linejoin="round"/><g fill="#1a8fc9"><path d="M17 19.500l1 16.500 -11-6z"/><path d="M26 10.500l-6.500 6.500v16.500L33 17.500z"/><path d="M38 22.500l7.500 7.500-7.500 7.500L30.500 30z"/><path d="M26 34.500l7.500 7.500L26 49.500 18.500 42z"/></g>`,
 whatsapp:`<path d="M26 9a21 21 0 1 1-9.500 39.700L5 51.500 8 40A21 21 0 0 1 26 9z" fill="#f4f6f4"/><path d="M26 13a17 17 0 1 1-8.600 31.600L11 46.300l1.700-6.100A17 17 0 0 1 26 13z" fill="#1bc93c"/><path d="M18.500 21c2-1.500 3-.8 4 1.500.8 2 1 3-.6 4.500 1.500 3.500 4 5.500 7 7 1.800-2 2.500-2.200 4.500-1 2.500 1.300 2.800 2 1.500 4-5.500 6-21-8-16.400-16z" fill="#f6fff7"/>`,
 eclipse:`<circle cx="23" cy="30" r="21" fill="#f79a17"/><circle cx="29" cy="30" r="21" fill="#28202e"/><circle cx="29" cy="30" r="20" fill="#332567"/><path d="M14 30h32c-1 9-7 15-15 15s-15-6-17-15z" fill="#4b3390"/><rect x="9" y="22" width="40" height="15" fill="#1c1438"/><path d="M9 24.500h40M8.500 30h41.500M9 35.500h40" stroke="#fff" stroke-width="2.600"/>`,
 artrage:`<rect x="7" y="11" width="38" height="38" fill="#9c1f7d"/><text x="9" y="45.500" font-family="'Open Sans',sans-serif" font-weight="700" font-size="35" textLength="18" lengthAdjust="spacingAndGlyphs" fill="#fff">a</text><g fill="none" stroke="#fff" stroke-width="3"><path d="M7 21.500c5 .3 8 .8 12 1.800M22.500 11.500c0 3 .5 5.500 1.200 8M29 23.500c4.500-2.500 9-3.800 15.500-4M28 27.500c8 4 13 10.500 17 19"/></g>`,
 discord:`<circle cx="26" cy="30" r="21" fill="#eceef7"/><circle cx="26" cy="30" r="18.800" fill="#5565c6"/>${FACE}`,
 word:`<rect x="26" y="13" width="21" height="34" rx="1" fill="#fafafa"/><path d="M28 18.500h16M28 23h16M28 27.500h16M28 32h16M28 36.500h16M28 41h16" stroke="#30343c" stroke-width="1.200"/><path d="M31 20.700h9M34 29.700h8M30 38.700h6" stroke="#8fb0e8" stroke-width="2"/><path d="M5 14l25-5v42L5 46z" fill="#2b5cb0"/><path d="M5 46l25-14v19z" fill="#244e9c"/><text x="9" y="36" font-family="Lato,sans-serif" font-weight="900" font-size="17" fill="#fff" textLength="15" lengthAdjust="spacingAndGlyphs">W</text>`,
 atom:`<defs><linearGradient id="a" x2="0" y2="1"><stop stop-color="#8fdc7c"/><stop offset="1" stop-color="#12b87e"/></linearGradient></defs><circle cx="26" cy="30" r="21" fill="#eef7f0"/><circle cx="26" cy="30" r="19" fill="url(#a)"/>${ATOM}`,
 terminal:`<rect x="5.500" y="11" width="41" height="37" rx="1" fill="#9fb0b6"/><rect x="6.500" y="13" width="39" height="34" fill="#161616"/><rect x="8" y="14.500" width="36" height="31" fill="#232323"/><text x="10" y="24" font-family="'Liberation Mono',monospace" font-weight="700" font-size="10" fill="#f2f2f2">&gt;_</text>`,
 folder:`<path d="M3.500 14.500q0-2 2-2h9q1.500 0 2.500 1.500l1 1.500h28q2 0 2 2V46q0 1.500-1.500 1.500h-41.500q-1.500 0-1.500-1.500z" fill="#62b8e0"/><path d="M3.500 18h45v28q0 1.500-1.500 1.500h-42q-1.500 0-1.500-1.500z" fill="#5ccbf5"/><circle cx="26" cy="31.500" r="10.300" fill="#3aabdd"/><path d="M26 26v7" stroke="#6dd0f6" stroke-width="3.500"/><path d="M20.500 32.500h11L26 38z" fill="#6dd0f6"/>`,
 thumbA:`<rect x="3.500" y="17.500" width="45" height="26" fill="#2f3136"/><rect x="3.500" y="17.500" width="10" height="26" fill="#24262b"/><rect x="3.500" y="17.500" width="45" height="2" fill="#44464c"/><path d="M15 21h1.500M15 26h1.500M15 34h1.500M15 38h1.500" stroke="#c8525a" stroke-width="1.300"/><path d="M18 21h8M18 23h5M18 26h9M18 30h10M18 34h7M18 38h8M42 22h4M42 26h3" stroke="#6a6f77" stroke-width=".7"/><g transform="translate(40.500 44.500) scale(.37) translate(-26 -30)"><circle cx="26" cy="30" r="21.500" fill="#e6e8f5"/><circle cx="26" cy="30" r="18.500" fill="#5565c6"/>${FACE}</g>`,
 thumbB:`<rect x="3.500" y="17.500" width="45" height="26" fill="#2a2e35"/><rect x="3.500" y="17.500" width="10" height="26" fill="#23272d"/><rect x="3.500" y="17.500" width="45" height="2" fill="#4c4f55"/><path d="M16 23h8M16 26h12M16 29h7M16 32h10M32 22h12M32 26h5M32 32h7" stroke="#4a505b" stroke-width=".7"/><path d="M18 35h8" stroke="#4f7f58" stroke-width=".7"/><g transform="translate(40.500 44.500) scale(.37) translate(-26 -30)"><circle cx="26" cy="30" r="21.500" fill="#d6f5e2"/><circle cx="26" cy="30" r="18.500" fill="#27c479"/>${ATOM}</g>`,
 trash:`<defs><linearGradient id="a"><stop stop-color="#c9c9c9"/><stop offset=".3" stop-color="#f3f3f3"/><stop offset=".7" stop-color="#dedede"/><stop offset="1" stop-color="#bcbcbc"/></linearGradient></defs><path d="M9 13l7-4 8 2 6-3 9 4 3 4-2 6H12z" fill="#dcdfe0"/><path d="M14 14l5-3 3 4zM24 12l4 3-3 3zM32 11l5 4-5 2z" fill="#2d3d40"/><path d="M20 15l4-2 1 3zM29 17l3-3 2 3z" fill="#4fa88c"/><path d="M9 13q17 8 34 0l-4 34q-.5 4-4 4.500-9 1.500-18 0-3.500-.5-4-4.500z" fill="url(#a)"/><path d="M9 13q17 8 34 0" fill="none" stroke="#fbfbfb" stroke-width="1.300"/><path d="M17 24l7 6 10-5M16 34l8 8 12-9M22 46l9-5" stroke="#d0d0d0" stroke-width="1" fill="none"/>`
};
el('dock-app', `:host{display:flex;flex-direction:column;align-items:center;width:52px;height:64px;flex:none}svg{display:block}.p{fill:#120e0e}`,
 e => `<svg width="52" height="64">${APPS[e.getAttribute('app')]}${e.hasAttribute('on')?'<circle class="p" cx="26" cy="60" r="2"/>':''}</svg>`);
el('mac-dock', `:host{display:flex;box-sizing:border-box;width:1020px;height:64px;padding:0 4px;border-radius:5px 5px 0 0;position:relative;z-index:2;box-shadow:0 2px 48px rgba(0,0,0,.22);
 background:linear-gradient(90deg,#5f5556 0,#605657 300px,#5c5659 450px,#5b5b66 560px,#646a80 680px,#6d7491 750px,#72708a 790px,#8d6867 820px,#c36a4b 860px,#df6d3e 900px,#e16d3d 960px,#c5664a 990px,#8f594f 1020px)}
 .sep{width:24px;flex:none;display:flex;justify-content:center;align-items:center}.sep i{width:1px;height:48px;background:#3d3f52;margin-bottom:-6px;margin-left:1px}`,
 ['finder*','chrome*','calendar','messages*','facetime','itunes*','prefs','kodi','whatsapp','eclipse','artrage','discord*','word*','atom*','terminal*'].map(a=>`<dock-app app="${a.replace('*','')}" ${a.endsWith('*')?'on':''}></dock-app>`).join('') +
 '<div class="sep"><i></i></div>' + ['folder','thumbA','thumbB','trash'].map(a=>`<dock-app app="${a}"></dock-app>`).join(''));

el('mac-desktop', ':host{display:flex;flex-direction:column;width:1440px;height:900px;overflow:hidden;background:#0d0a0b}.bottom{display:flex}',
 '<mac-menubar></mac-menubar><chrome-window></chrome-window><div class="bottom"><rock-wall></rock-wall><mac-dock></mac-dock><rock-wall lava></rock-wall></div>');

/* Single-line label that spaces its letters to occupy exactly w pixels */
customElements.define('fit-text', class extends HTMLElement {
  connectedCallback(){
    if (this.shadowRoot) return;
    this.attachShadow({mode:'open'}).innerHTML = '<style>:host{display:block;flex:none;white-space:nowrap;line-height:1.2}span{display:inline-block}</style><span><slot></slot></span>';
    const w = +this.getAttribute('w'), span = this.shadowRoot.querySelector('span');
    this.style.width = w + 'px';
    const n = this.textContent.length, nat = span.getBoundingClientRect().width;
    if (nat) span.style.letterSpacing = ((w - nat) / n).toFixed(3) + 'px';
  }
});
</script>
</body>
</html>
